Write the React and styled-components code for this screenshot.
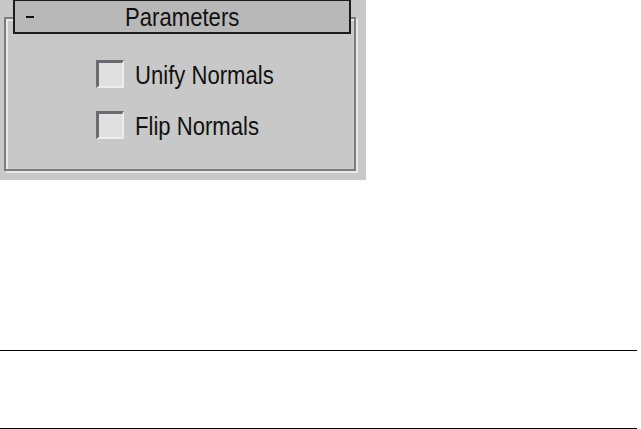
import React from "react";
import styled, { createGlobalStyle } from "styled-components";

const GlobalStyle = createGlobalStyle`
  html, body { margin: 0; padding: 0; background: #ffffff; }
  body { width: 641px; height: 429px; overflow: hidden; font-family: "Liberation Sans", Arial, sans-serif; }
`;

const Page = styled.div`
  display: flex;
  flex-direction: column;
  width: 641px;
  height: 429px;
`;

const Panel = styled.div`
  width: 366px;
  height: 180px;
  box-sizing: border-box;
  background: #c8c8c8;
  padding: 0 8px 0 4px;
  display: flex;
  flex-direction: column;
`;

const RolloutHeader = styled.div`
  position: relative;
  z-index: 1;
  height: 34px;
  box-sizing: border-box;
  margin: 0 7px -17px 8.5px;
  border: 2px solid #1c1c1c;
  border-top-width: 1px;
  background: #b8b8b8;
  display: flex;
  align-items: center;
  justify-content: center;
  font-size: 26px;
  color: #111;
`;

const Collapse = styled.span`
  position: absolute;
  left: 11px;
  top: 15px;
  width: 8px;
  height: 2px;
  background: #111;
`;

const Squeezed = styled.span`
  display: inline-block;
  line-height: 1;
  white-space: nowrap;
  transform: scaleX(0.85);
  transform-origin: ${(p) => (p.$center ? "center" : "left")} center;
  margin-top: 1px;
`;

const Frame = styled.div`
  width: 352px;
  height: 154px;
  box-sizing: border-box;
  border: 2px solid #7c7c7c;
  box-shadow: inset 2px 2px 0 #e8e8e8, 2px 2px 0 #e8e8e8;
  padding: 41px 0 0 90px;
  display: flex;
  flex-direction: column;
  gap: 23px;
`;

const CheckRow = styled.label`
  display: flex;
  align-items: center;
  gap: 11px;
  height: 28px;
  font-size: 26px;
  color: #111;
  line-height: 1;
`;

const Box = styled.span`
  width: 28px;
  height: 28px;
  box-sizing: border-box;
  background: #e0e0e0;
  border-top: 3px solid #686b6f;
  border-left: 3px solid #686b6f;
  border-right: 2px solid #ececec;
  border-bottom: 2px solid #ececec;
  flex: none;
`;

const Spacer = styled.div`
  height: ${(p) => p.$h}px;
  flex: none;
`;

const Rule = styled.div`
  width: 637px;
  height: 1px;
  background: #000;
  flex: none;
`;

export default function App() {
  return (
    <>
      <GlobalStyle />
      <Page>
        <Panel>
          <RolloutHeader>
            <Collapse />
            <Squeezed $center>Parameters</Squeezed>
          </RolloutHeader>
          <Frame>
            <CheckRow>
              <Box />
              <Squeezed>Unify Normals</Squeezed>
            </CheckRow>
            <CheckRow>
              <Box />
              <Squeezed>Flip Normals</Squeezed>
            </CheckRow>
          </Frame>
        </Panel>
        <Spacer $h={170} />
        <Rule />
        <Spacer $h={77} />
        <Rule />
      </Page>
    </>
  );
}
